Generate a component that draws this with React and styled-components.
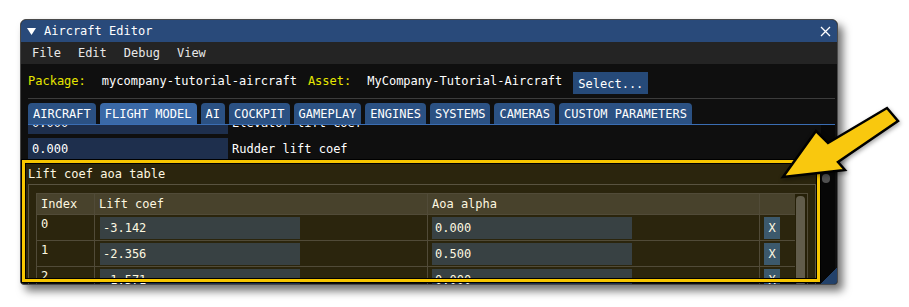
import React from "react";
import styled, { createGlobalStyle } from "styled-components";

const GlobalStyle = createGlobalStyle`
  html, body {
    margin: 0;
    padding: 0;
    background: #ffffff;
  }
  body {
    font-family: "DejaVu Sans Mono", "Liberation Mono", monospace;
    font-size: 12px;
    color: #ffffff;
  }
`;

const TABS = [
  "AIRCRAFT",
  "FLIGHT MODEL",
  "AI",
  "COCKPIT",
  "GAMEPLAY",
  "ENGINES",
  "SYSTEMS",
  "CAMERAS",
  "CUSTOM PARAMETERS",
];

const ROWS = [
  { index: 0, lift: "-3.142", aoa: "0.000" },
  { index: 1, lift: "-2.356", aoa: "0.500" },
  { index: 2, lift: "-1.571", aoa: "0.000" },
];

export default function App() {
  return (
    <Page>
      <GlobalStyle />
      <Window>
        <TitleBar>
          <TitleLeft>
            <svg width="9" height="7" viewBox="0 0 9 7">
              <polygon points="0,0 9,0 4.5,7" fill="#ffffff" />
            </svg>
            <span>Aircraft Editor</span>
          </TitleLeft>
          <svg width="11" height="11" viewBox="0 0 11 11">
            <path d="M1 1 L10 10 M10 1 L1 10" stroke="#ffffff" strokeWidth="1.3" />
          </svg>
        </TitleBar>
        <MenuBar>
          <MenuItem>File</MenuItem>
          <MenuItem>Edit</MenuItem>
          <MenuItem>Debug</MenuItem>
          <MenuItem>View</MenuItem>
        </MenuBar>
        <Body>
          <PackageRow>
            <Label>Package:</Label>
            <Value $gap={16}>mycompany-tutorial-aircraft</Value>
            <Label $gap={11}>Asset:</Label>
            <Value $gap={16}>MyCompany-Tutorial-Aircraft</Value>
            <Button>Select...</Button>
          </PackageRow>
          <Separator />
          <TabBar>
            {TABS.map((t) => (
              <Tab key={t} $active={t === "FLIGHT MODEL"}>{t}</Tab>
            ))}
          </TabBar>
          <ScrollArea>
            <ScrollContent>
              <FieldRow>
                <FieldInput>0.000</FieldInput>
                <span>Elevator lift coef</span>
              </FieldRow>
              <FieldRow>
                <FieldInput>0.000</FieldInput>
                <span>Rudder lift coef</span>
              </FieldRow>
              <SectionTitle>Lift coef aoa table</SectionTitle>
              <ChildBox>
                <TableFrame>
                  <TableGrid>
                    <HeadCell>Index</HeadCell>
                    <HeadCell>Lift coef</HeadCell>
                    <HeadCell>Aoa alpha</HeadCell>
                    <HeadCell $last />
                    {ROWS.map((r) => (
                      <React.Fragment key={r.index}>
                        <Cell>{r.index}</Cell>
                        <Cell $inset={5}><TableInput>{r.lift}</TableInput></Cell>
                        <Cell $inset={4}><TableInput>{r.aoa}</TableInput></Cell>
                        <Cell $inset={4} $last><RemoveButton>X</RemoveButton></Cell>
                      </React.Fragment>
                    ))}
                  </TableGrid>
                  <TableScroll>
                    <TableGrab />
                  </TableScroll>
                </TableFrame>
              </ChildBox>
            </ScrollContent>
            <WindowScroll>
              <WindowGrab />
            </WindowScroll>
          </ScrollArea>
        </Body>
        <ResizeGrip />
      </Window>
      <Highlight />
      <ArrowLayer width="909" height="307" viewBox="0 0 909 307">
        <polygon
          points="783,177 816,131 828,143 887,108 898,121 838,162 845,170"
          fill="#f9c80e"
          stroke="#000000"
          strokeWidth="2.5"
          strokeLinejoin="miter"
        />
      </ArrowLayer>
    </Page>
  );
}

const Page = styled.div`
  position: relative;
  width: 909px;
  height: 307px;
  overflow: hidden;
  padding: 19px 0 0 20px;
  box-sizing: border-box;
`;

const Window = styled.div`
  position: relative;
  width: 818px;
  height: 266px;
  box-sizing: border-box;
  border: 1px solid #4a4a4a;
  border-radius: 6px 6px 4px 4px;
  background: #0f0f0f;
  box-shadow: 5px 6px 8px rgba(0, 0, 0, 0.55);
  overflow: hidden;
  display: flex;
  flex-direction: column;
`;

const TitleBar = styled.div`
  height: 22px;
  flex: none;
  background: #294a7a;
  display: flex;
  align-items: center;
  justify-content: space-between;
  padding: 0 6px 0 6px;
`;

const TitleLeft = styled.div`
  display: flex;
  align-items: center;
  gap: 8px;
`;

const MenuBar = styled.div`
  height: 22px;
  flex: none;
  background: #242424;
  display: flex;
  align-items: center;
  gap: 17px;
  padding-left: 11px;
  color: #e8e8e8;
`;

const MenuItem = styled.span``;

const Body = styled.div`
  flex: 1;
  min-height: 0;
  display: flex;
  flex-direction: column;
  padding: 0 2px 0 7px;
`;

const PackageRow = styled.div`
  height: 34px;
  flex: none;
  box-sizing: border-box;
  padding-top: 8px;
  display: flex;
  align-items: flex-start;
`;

const Label = styled.span`
  color: #e6e600;
  line-height: 14px;
  margin-top: 2px;
  margin-left: ${(p) => p.$gap || 0}px;
`;

const Value = styled.span`
  color: #ffffff;
  line-height: 14px;
  margin-top: 2px;
  margin-left: ${(p) => p.$gap || 0}px;
`;

const Button = styled.div`
  margin-left: 11px;
  height: 22px;
  line-height: 24px;
  padding: 0 5px;
  background: #264a79;
  color: #ffffff;
`;

const Separator = styled.div`
  height: 1px;
  flex: none;
  background: #3c3c3c;
`;

const TabBar = styled.div`
  flex: none;
  margin-top: 4px;
  display: flex;
  gap: 4px;
  border-bottom: 1px solid #3a6db3;
`;

const Tab = styled.div`
  height: 21px;
  line-height: 22px;
  padding: 0 5px;
  border-radius: 4px 4px 0 0;
  background: ${(p) => (p.$active ? "#3a69a7" : "#2b5183")};
  color: #ffffff;
`;

const ScrollArea = styled.div`
  flex: 1;
  min-height: 0;
  display: flex;
  overflow: hidden;
`;

const ScrollContent = styled.div`
  flex: 1;
  min-width: 0;
  margin-top: -13px;
`;

const FieldRow = styled.div`
  height: 22px;
  margin-bottom: 4px;
  display: flex;
  align-items: center;
  gap: 4px;
`;

const FieldInput = styled.div`
  width: 200px;
  height: 22px;
  line-height: 22px;
  box-sizing: border-box;
  padding-left: 4px;
  background: #1e2f4d;
`;

const SectionTitle = styled.div`
  line-height: 14px;
  padding-top: 3px;
`;

const ChildBox = styled.div`
  margin-top: 3px;
  width: 788px;
  box-sizing: border-box;
  border: 1px solid #444449;
  padding: 8px 7px;
`;

const TableFrame = styled.div`
  display: flex;
  align-items: flex-start;
  border: 1px solid #3b3b40;
`;

const TableGrid = styled.div`
  flex: 1;
  display: grid;
  grid-template-columns: 58px 333px 332px 1fr;
  align-content: start;
`;

const HeadCell = styled.div`
  height: 20px;
  line-height: 20px;
  padding-left: 4px;
  background: #303033;
  border-right: ${(p) => (p.$last ? "none" : "1px solid #3b3b40")};
`;

const Cell = styled.div`
  height: 26px;
  box-sizing: border-box;
  padding: 2px 0 0 ${(p) => p.$inset || 4}px;
  line-height: 14px;
  border-top: 1px solid #3b3b40;
  border-right: ${(p) => (p.$last ? "none" : "1px solid #3b3b40")};
`;

const TableInput = styled.div`
  width: 200px;
  height: 22px;
  line-height: 22px;
  box-sizing: border-box;
  padding-left: 3px;
  background: #1e2f4d;
`;

const RemoveButton = styled.div`
  width: 16px;
  height: 22px;
  line-height: 22px;
  text-align: center;
  background: #234a7b;
`;

const TableScroll = styled.div`
  align-self: stretch;
  width: 12px;
  flex: none;
  background: #0a0a0a;
  padding: 2px 2px 0 1px;
  box-sizing: border-box;
`;

const TableGrab = styled.div`
  height: 90px;
  border-radius: 4px;
  background: #4d4e56;
`;

const WindowScroll = styled.div`
  width: 14px;
  flex: none;
  background: #070707;
  padding: 49px 5px 0 1px;
  box-sizing: border-box;
`;

const WindowGrab = styled.div`
  height: 9px;
  border-radius: 4px;
  background: #505050;
`;

const ResizeGrip = styled.div`
  position: absolute;
  right: 0;
  bottom: 0;
  width: 16px;
  height: 16px;
  background: linear-gradient(135deg, transparent 50%, #22416a 50%);
`;

const Highlight = styled.div`
  position: absolute;
  left: 22px;
  top: 160px;
  width: 798px;
  height: 122px;
  box-sizing: border-box;
  border: 3px solid #f7c600;
  box-shadow: 0 0 0 1px #000000, inset 0 0 0 1px #000000;
  background: rgba(250, 200, 0, 0.12);
  pointer-events: none;
`;

const ArrowLayer = styled.svg`
  position: absolute;
  left: 0;
  top: 0;
  pointer-events: none;
  filter: drop-shadow(1px 2px 2px rgba(0, 0, 0, 0.35));
`;
